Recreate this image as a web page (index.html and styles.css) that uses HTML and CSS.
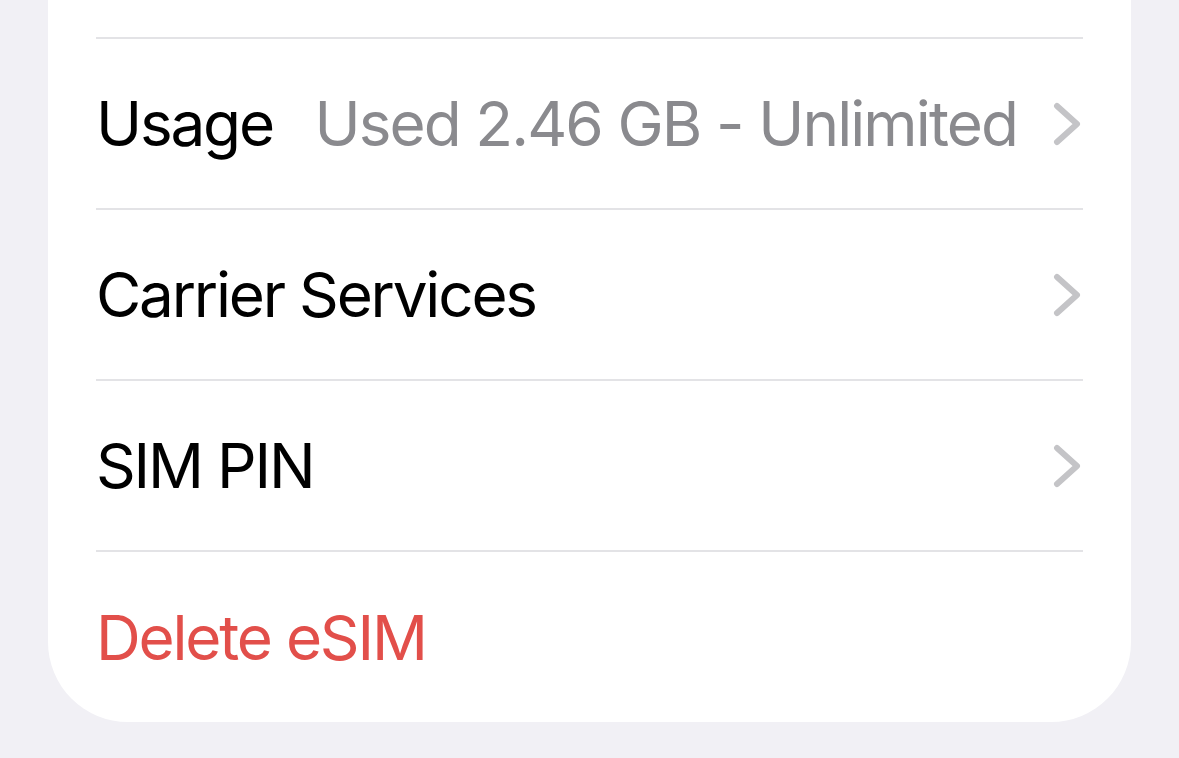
FILE: index.html
```html
<!DOCTYPE html>
<html lang="en">
<head>
    <meta charset="UTF-8">
    <meta name="viewport" content="width=device-width, initial-scale=1.0">
    <title>eSIM</title>
    <link rel="stylesheet" href="styles.css">
</head>
<body>
    <div class="card">
        <div class="row">
            <span class="label">Usage</span>
            <span class="value">Used 2.46 GB - Unlimited</span>
            <svg class="chevron" viewBox="0 0 30 44"><path d="M4 4 L24 22 L4 40"/></svg>
        </div>
        <div class="row">
            <span class="label">Carrier Services</span>
            <svg class="chevron" viewBox="0 0 30 44"><path d="M4 4 L24 22 L4 40"/></svg>
        </div>
        <div class="row">
            <span class="label">SIM PIN</span>
            <svg class="chevron" viewBox="0 0 30 44"><path d="M4 4 L24 22 L4 40"/></svg>
        </div>
        <div class="row last">
            <span class="label danger">Delete eSIM</span>
        </div>
    </div>
</body>
</html>
```

FILE: styles.css
```css
* { box-sizing: border-box; }

body {
    margin: 0;
    background: #f1f0f5;
    font-family: Inter, 'Noto Sans', sans-serif;
    height: 758px;
    overflow: hidden;
}

.card {
    margin: 0 48px;
    padding: 37px 48px 0 48px;
    background: white;
    border-radius: 0 0 80px 80px;
}

.row {
    display: flex;
    align-items: center;
    height: 171px;
    border-top: 2px solid #e3e3e6;
}

.row.last {
    height: 172px;
}

.label {
    font-size: 62px;
    color: #000;
    letter-spacing: -2.2px;
    white-space: nowrap;
}

.label.danger {
    color: #e24f4a;
}

.value {
    margin-left: auto;
    margin-right: 36px;
    font-size: 62px;
    color: #8a8a8e;
    letter-spacing: -1.9px;
    white-space: nowrap;
}

.chevron {
    flex-shrink: 0;
    width: 30px;
    height: 44px;
    margin-left: auto;
    fill: none;
    stroke: #c4c4c7;
    stroke-width: 6;
    stroke-linecap: round;
    stroke-linejoin: round;
}

.value + .chevron {
    margin-left: 0;
}
```
